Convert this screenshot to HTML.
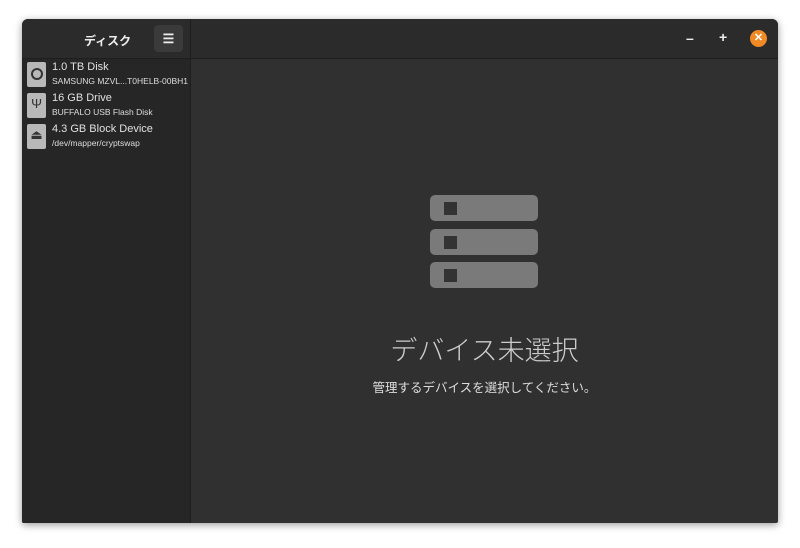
<!DOCTYPE html><html><head><meta charset="utf-8"><style>
body{margin:0;width:800px;height:548px;background:#fff;font-family:"Liberation Sans","Noto Sans CJK JP",sans-serif;position:relative;overflow:hidden}
.win{position:absolute;left:22px;top:19px;width:756px;height:504px;background:#303030;border-radius:6px 6px 2px 2px;box-shadow:0 2px 8px rgba(0,0,0,.4);overflow:hidden}
.hdr{position:absolute;left:0;top:0;right:0;height:39px;background:#2b2b2b;border-bottom:1px solid #1e1e1e}
.side{position:absolute;left:0;top:40px;width:168px;bottom:0;background:#262626;border-right:1px solid #1e1e1e}
.sep{position:absolute;left:168px;top:0;width:1px;height:39px;background:#1e1e1e}
.t{position:absolute;color:#eee;font-size:12px;font-weight:bold}
.menu{position:absolute;left:132px;top:6px;width:29px;height:27px;background:#3a3a3a;border-radius:4px;color:#eee;text-align:center;line-height:27px;font-size:13px;font-weight:bold}
.item{position:absolute;left:5px;height:28px}
.ic{position:absolute;left:0;top:2px;width:19px;height:25px;background:#b8b8b8;border-radius:2px}
.n{position:absolute;left:25px;top:1px;color:#e0e0e0;font-size:11px;white-space:nowrap}
.s{position:absolute;left:25px;top:16px;color:#ddd;font-size:8.5px;white-space:nowrap}
.bar{position:absolute;left:408px;width:108px;height:26px;background:#7a7a7a;border-radius:5px}
.bar i{position:absolute;left:14px;top:7px;width:13px;height:13px;background:#333}
</style></head><body>
<div class="win">
<div class="hdr"></div><div class="sep"></div>
<div class="t" style="left:62px;top:13px">ディスク</div>
<div class="menu">☰</div>
<div class="t" style="left:664px;top:11px;font-size:14px">–</div>
<div class="t" style="left:697px;top:10px;font-size:14px">+</div>
<div style="position:absolute;left:728px;top:11px;width:17px;height:17px;border-radius:50%;background:#f08a24;color:#fff;font-size:11px;font-weight:bold;text-align:center;line-height:17px">✕</div>
<div class="side">
<div class="item" style="top:1px"><div class="ic"><div style="position:absolute;left:4px;top:6px;width:8px;height:8px;border:2px solid #333;border-radius:50%"></div></div><div class="n">1.0 TB Disk</div><div class="s">SAMSUNG MZVL...T0HELB-00BH1</div></div>
<div class="item" style="top:32px"><div class="ic"><div style="position:absolute;left:0;width:19px;top:3px;text-align:center;color:#333;font-size:13px">Ψ</div></div><div class="n">16 GB Drive</div><div class="s">BUFFALO USB Flash Disk</div></div>
<div class="item" style="top:63px"><div class="ic"><div style="position:absolute;left:0;width:19px;top:3px;text-align:center;color:#333;font-size:13px">⏏</div></div><div class="n">4.3 GB Block Device</div><div class="s">/dev/mapper/cryptswap</div></div>
</div>
<div class="bar" style="top:176px"><i></i></div>
<div class="bar" style="top:210px"><i></i></div>
<div class="bar" style="top:243px"><i></i></div>
<div style="position:absolute;left:169px;right:0;top:310px;text-align:center;color:#ccc;font-size:27px;font-weight:300">デバイス未選択</div>
<div style="position:absolute;left:169px;right:0;top:358px;text-align:center;color:#ddd;font-size:12.5px">管理するデバイスを選択してください。</div>
</div>
</body></html>
